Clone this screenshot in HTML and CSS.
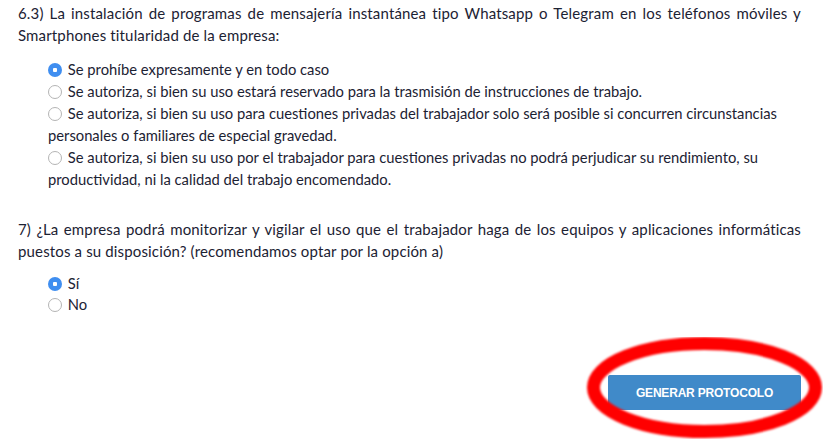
FILE: index.html
```html
<!DOCTYPE html>
<html lang="es">
<head>
<meta charset="utf-8">
<link rel="stylesheet" href="styles.css">
</head>
<body>
<main class="form">
  <section class="question">
    <p class="q-text">6.3) La instalación de programas de mensajería instantánea tipo Whatsapp o Telegram en los teléfonos móviles y Smartphones titularidad de la empresa:</p>
    <ul class="options">
      <li><label><input type="radio" name="q63" checked> Se prohíbe expresamente y en todo caso</label></li>
      <li><label><input type="radio" name="q63"> Se autoriza, si bien su uso estará reservado para la trasmisión de instrucciones de trabajo.</label></li>
      <li><label><input type="radio" name="q63"> Se autoriza, si bien su uso para cuestiones privadas del trabajador solo será posible si concurren circunstancias personales o familiares de especial gravedad.</label></li>
      <li><label><input type="radio" name="q63"> Se autoriza, si bien su uso por el trabajador para cuestiones privadas no podrá perjudicar su rendimiento, su productividad, ni la calidad del trabajo encomendado.</label></li>
    </ul>
  </section>
  <section class="question q7">
    <p class="q-text">7) ¿La empresa podrá monitorizar y vigilar el uso que el trabajador haga de los equipos y aplicaciones informáticas puestos a su disposición? (recomendamos optar por la opción a)</p>
    <ul class="options">
      <li><label><input type="radio" name="q7" checked> Sí</label></li>
      <li><label><input type="radio" name="q7"> No</label></li>
    </ul>
  </section>
  <div class="actions">
    <button class="btn" type="button">GENERAR PROTOCOLO</button>
    <svg class="mark" width="250" height="104" viewBox="0 0 250 104">
      <defs><filter id="b" filterUnits="userSpaceOnUse" x="0" y="0" width="250" height="104"><feGaussianBlur stdDeviation="1.3"/></filter></defs>
      <ellipse cx="131.5" cy="50.5" rx="111" ry="44" fill="none" stroke="#ff0000" stroke-width="13" filter="url(#b)"/>
    </svg>
  </div>
</main>
</body>
</html>
```
FILE: styles.css
```css
html, body { margin: 0; padding: 0; background: #fff; }
html { height: 100%; }
body {
  min-height: 439px;
  height: 100%;
  overflow: hidden;
  font-family: Lato, "Open Sans", sans-serif;
  font-size: 15px;
  line-height: 22px;
  color: #1c2233;
}
.form { width: 783px; padding: 2px 24px 0 18px; }
.q-text { margin: 0; text-align: justify; letter-spacing: 0.15px; }
.options { list-style: none; margin: 12px 0 0; padding: 0 0 0 30px; font-size: 14.75px; }
.options li { margin: 0; }
.options input {
  appearance: none;
  -webkit-appearance: none;
  width: 14px; height: 14px;
  margin: 0 2px 0 0;
  vertical-align: -2px;
  border: 1px solid #b4b4b4;
  border-radius: 50%;
  background: #fff;
  box-sizing: border-box;
}
.options input:checked {
  border: none;
  background: radial-gradient(circle, #fff 0 2px, #3f8ef0 2.5px);
}
.q7 { margin-top: 28px; }
.q7 .options { margin-top: 10px; }
.q7 .options li + li { margin-top: -1px; }
.actions { position: relative; display: flex; justify-content: flex-end; margin-top: 60px; }
.btn {
  width: 193px; height: 35px;
  background: #408ac9;
  color: #fff;
  border: none;
  border-radius: 2px;
  font-family: "Liberation Sans", Arial, sans-serif;
  font-weight: bold;
  font-size: 12px;
  letter-spacing: -0.2px;
}
.mark { position: absolute; right: -22px; top: -38px; pointer-events: none; }
```
